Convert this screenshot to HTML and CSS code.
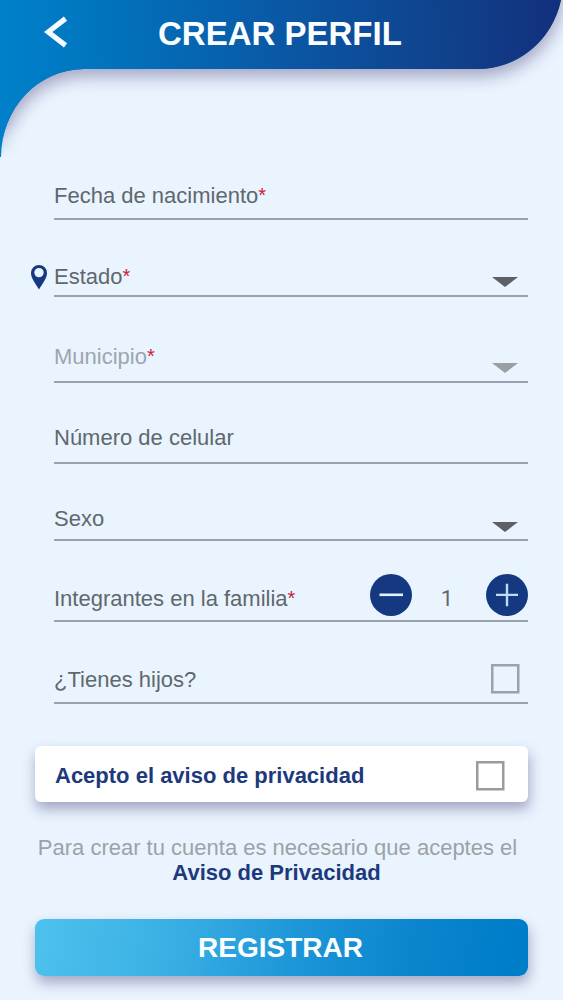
FILE: index.html
```
<!DOCTYPE html>
<html lang="es">
<head>
<meta charset="utf-8">
<title>Crear perfil</title>
<meta name="viewport" content="width=device-width, initial-scale=1">
<link rel="stylesheet" href="styles.css">
</head>
<body>
<div class="screen">
  <header class="header">
    <svg class="header-shape" width="563" height="200" viewBox="0 0 563 200" aria-hidden="true">
      <defs>
        <linearGradient id="headerFill" gradientUnits="userSpaceOnUse" x1="0" y1="50" x2="563" y2="35">
          <stop offset="0" stop-color="#0080ca"/>
          <stop offset=".13" stop-color="#0078c2"/>
          <stop offset=".5" stop-color="#0a58a5"/>
          <stop offset=".8" stop-color="#10418c"/>
          <stop offset="1" stop-color="#132f7c"/>
        </linearGradient>
        <linearGradient id="fadeStops" x1="0" y1="0" x2="0" y2="1">
          <stop offset=".62" stop-color="#fff"/>
          <stop offset=".785" stop-color="#000"/>
        </linearGradient>
        <mask id="shadowFade" maskUnits="userSpaceOnUse" x="0" y="0" width="563" height="200">
          <rect width="563" height="200" fill="url(#fadeStops)"/>
        </mask>
      </defs>
      <g mask="url(#shadowFade)"><path class="header-fill" d="M-40-40H563V-19A85 88 0 0 1 478 69H84A83 88 0 0 0 1 157H-40Z" fill="#0a58a5"/></g>
      <path d="M0 0H561A85 88 0 0 1 478 69H84A83 88 0 0 0 1 157H0Z" fill="url(#headerFill)"/>
    </svg>
    <button class="back" aria-label="Volver">
      <svg width="26" height="34" viewBox="0 0 26 34" aria-hidden="true"><path d="M21.500 3.600 4.200 17 21.500 30.400" fill="none" stroke="#f5fcff" stroke-width="5.200"/></svg>
    </button>
    <h1 class="title">CREAR PERFIL</h1>
  </header>

  <main class="form">
    <div class="field birth"><span class="label">Fecha de nacimiento<b class="req">*</b></span></div>
    <div class="field state">
      <svg class="pin" width="16" height="25" viewBox="0 0 16 25" aria-hidden="true"><path fill-rule="evenodd" d="M8 0a8 8 0 0 1 8 8c0 5.200-4.500 10.500-8 16.600C4.500 18.500 0 13.200 0 8a8 8 0 0 1 8-8Zm0 2.900a4.700 4.700 0 1 0 0 9.400 4.700 4.700 0 0 0 0-9.400Z" fill="#17397f"/></svg>
      <span class="label">Estado<b class="req">*</b></span>
      <svg class="arrow" width="26" height="10" viewBox="0 0 26 10" aria-hidden="true"><path d="M0 0h26L13 10Z"/></svg>
    </div>
    <div class="field town disabled">
      <span class="label">Municipio<b class="req">*</b></span>
      <svg class="arrow" width="26" height="10" viewBox="0 0 26 10" aria-hidden="true"><path d="M0 0h26L13 10Z"/></svg>
    </div>
    <div class="field phone"><span class="label">Número de celular</span></div>
    <div class="field sex">
      <span class="label">Sexo</span>
      <svg class="arrow" width="26" height="10" viewBox="0 0 26 10" aria-hidden="true"><path d="M0 0h26L13 10Z"/></svg>
    </div>
    <div class="field family">
      <span class="label">Integrantes en la familia<b class="req">*</b></span>
      <div class="stepper">
        <button class="step" aria-label="Menos"><svg width="42" height="42" viewBox="0 0 42 42"><path d="M9.500 20.800h23.500" stroke="#e1f1ff" stroke-width="2.600"/></svg></button>
        <span class="count">1</span>
        <button class="step" aria-label="Más"><svg width="42" height="42" viewBox="0 0 42 42"><path d="M10 20.900h22M21 9.700v22.500" stroke="#bddcf8" stroke-width="2.400"/></svg></button>
      </div>
    </div>
    <div class="field kids">
      <span class="label">¿Tienes hijos?</span>
      <svg class="box" width="29" height="30" viewBox="0 0 29 30" role="checkbox" aria-checked="false"><path d="M1.250 1.250h26v27h-26Z"/></svg>
    </div>
  </main>

  <div class="accept">
    <span>Acepto el aviso de privacidad</span>
    <svg class="box" width="29" height="30" viewBox="0 0 29 30" role="checkbox" aria-checked="false"><path d="M1.250 1.250h26v27h-26Z"/></svg>
  </div>
  <div class="note">Para crear tu cuenta es necesario que aceptes el <a class="link">Aviso de Privacidad</a></div>
  <button class="submit">REGISTRAR</button>
</div>
</body>
</html>
```
FILE: styles.css
```
* { box-sizing: border-box; }

body {
  margin: 0;
  background: #e9f4fe;
  font-family: "Liberation Sans", Arial, sans-serif;
  font-size: 22px;
}

button {
  border: 0;
  padding: 0;
  background: none;
  font-family: inherit;
}

svg { display: block; }

.screen {
  width: 563px;
  height: 1000px;
  overflow: hidden;
  display: flex;
  flex-direction: column;
}

.header {
  position: relative;
  flex: none;
  height: 158px;
  display: grid;
  grid-template-columns: 44px 26px 1fr;
  align-items: start;
}

.header-shape {
  position: absolute;
  top: 0;
  left: 0;
}

.header-fill { filter: drop-shadow(1px 8px 8px rgba(65, 55, 115, .4)); }

.back {
  position: relative;
  grid-column: 2;
  margin-top: 15px;
}

.title {
  position: relative;
  grid-column: 3;
  margin: 14px 0 0 88px;
  color: #fbfeff;
  font-size: 33px;
  line-height: 40px;
  font-weight: 700;
  white-space: nowrap;
}

.form { padding: 0 35px 0 54px; }

.field {
  display: flex;
  align-items: flex-start;
  justify-content: space-between;
  border-bottom: 2px solid #98a3ab;
  color: #5f686d;
}

.label {
  line-height: 26px;
  white-space: nowrap;
}

.req {
  color: #cf2037;
  font-size: 20px;
  font-weight: 400;
  line-height: 1;
  vertical-align: 1px;
}

.birth { height: 62px; padding-top: 25px; }
.state { height: 77px; padding-top: 44px; }
.town { height: 86px; padding-top: 47px; }
.phone { height: 81px; padding-top: 42px; }
.sex { height: 77px; padding-top: 42px; }
.family { height: 81px; padding-top: 45px; }
.kids { height: 82px; padding-top: 45px; }

.pin { margin: 1px 7px 0 -23px; }
.state .label { flex: 1; }

.arrow { margin: 13px 10px 0 0; fill: #5d6164; }
.town .arrow { margin-top: 19px; }
.sex .arrow { margin-top: 16px; }

.disabled { color: #9ca6ac; }
.disabled .arrow { fill: #9a9fa2; }

.stepper {
  display: grid;
  grid-template-columns: 42px 74px 42px;
  margin-top: -12px;
}

.step {
  width: 42px;
  height: 42px;
  border-radius: 50%;
  background: #153981;
}

.count {
  padding: 12px 4px 0 0;
  text-align: center;
  font-family: Roboto, sans-serif;
  line-height: 26px;
}

.box {
  flex: none;
  fill: none;
  stroke: #9aa3a6;
  stroke-width: 2.5px;
}

.kids .box { margin: -3px 8px 0 0; }

.accept {
  flex: none;
  display: flex;
  align-items: center;
  justify-content: space-between;
  height: 56px;
  margin: 42px 35px 0;
  padding: 4px 23px 0 20px;
  border-radius: 6px;
  background: #fff;
  box-shadow: 1px 7px 13px rgba(65, 55, 115, .42);
  color: #1d397d;
  font-weight: 700;
}

.accept .box { stroke: #9b9b9d; }

.note {
  display: flex;
  flex-direction: column;
  align-items: center;
  margin-top: 33px;
  padding-right: 8px;
  color: #9ba3a7;
  line-height: 26px;
}

.link {
  margin: -1px 2px 0 0;
  color: #1d397d;
  font-weight: 700;
}

.submit {
  flex: none;
  height: 57px;
  margin: 33px 35px 0;
  padding-right: 2px;
  border-radius: 9px;
  background: linear-gradient(100deg, #4cc1ed 2%, #38ade3 30%, #1e97d9 52%, #0b86ce 75%, #007dc9 96%);
  box-shadow: 1px 7px 13px rgba(65, 55, 115, .4);
  color: #fbfeff;
  font-size: 28px;
  font-weight: 700;
}
```
